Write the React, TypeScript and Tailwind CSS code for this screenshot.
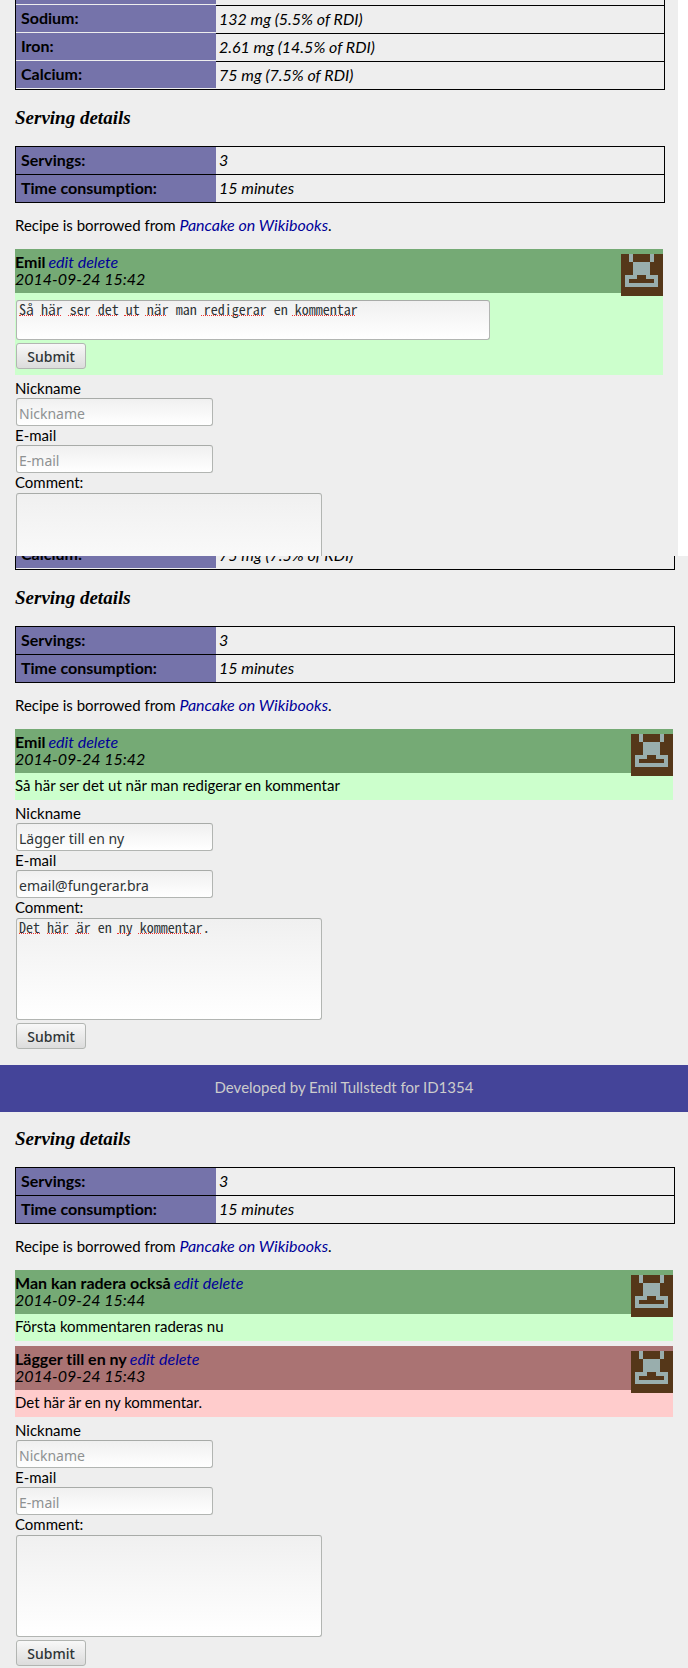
import type { ReactNode } from "react";

const FIELD =
  "block rounded-[3px] border border-[#b2b5b2] border-t-[#a8aba8] bg-linear-to-b from-[#f0f0f0] to-white px-0.5 text-[#2e3436] placeholder:text-[#8e9192] placeholder:opacity-100 outline-none";
const MONO =
  "font-['Noto_Sans_Mono_CJK_SC','Noto_Sans_Mono_CJK_JP','Liberation_Mono',monospace] text-[14px] leading-4";
const SANS = "font-['Noto_Sans',sans-serif] text-[14px]";

function Row({ label, value, light = false }: { label: string; value: string; light?: boolean }) {
  return (
    <tr className="h-7">
      <th
        scope="row"
        className={
          light
            ? "w-[200px] border-b border-b-[#eeeeee] bg-[#7573aa] bg-clip-padding pt-0 pr-0 pb-0.5 pl-[5px] text-left font-bold"
            : "w-[200px] border-b border-b-black bg-[#7573aa] pt-0 pr-0 pb-0.5 pl-[5px] text-left font-bold"
        }
      >
        {label}
      </th>
      <td
        className={
          light
            ? "border-t border-black pt-0 pr-0 pb-0.5 pl-[3px] italic"
            : "border-b border-black pt-0 pr-0 pb-0.5 pl-[3px] italic"
        }
      >
        {value}
      </td>
    </tr>
  );
}

function Table({ children, top = false }: { children: ReactNode; top?: boolean }) {
  return (
    <div className="-mr-0.5">
      <table
        className={
          top
            ? "w-full table-fixed border-separate border-spacing-0 border-x border-t border-black leading-[19px]"
            : "w-full table-fixed border-separate border-spacing-0 border-x border-b border-black leading-[19px]"
        }
      >
        <tbody>{children}</tbody>
      </table>
    </div>
  );
}

function Serving() {
  return (
    <>
      <h2 className="flex h-14 items-center font-['Liberation_Serif',serif] text-[19px] leading-6 font-bold italic">
        Serving details
      </h2>
      <Table top>
        <Row label="Servings:" value="3" />
        <Row label="Time consumption:" value="15 minutes" />
      </Table>
      <p className="pt-[13px] pb-[15px] text-[15px] leading-[18px]">
        Recipe is borrowed from{" "}
        <a href="#wikibooks" className="text-[16px] text-[#000099] italic">
          Pancake on Wikibooks
        </a>
        .
      </p>
    </>
  );
}

function Avatar() {
  return (
    <svg viewBox="0 0 42 42" className="absolute top-[5px] right-0 size-[42px]" shapeRendering="crispEdges" aria-hidden="true">
      <path fill="#553719" d="M0 0h42v42H0z" />
      <path
        fill="#99aead"
        d="M8 0h4v8h17V0h4v8h-4v13h8v12H4V21h8V8H8zM16 21v4H8v4h25v-4h-8v-4z"
        fillRule="evenodd"
      />
    </svg>
  );
}

type CommentProps = { name: string; date: string; tone?: "green" | "red"; children: ReactNode };

function Comment({ name, date, tone = "green", children }: CommentProps) {
  return (
    <article className={tone === "green" ? "relative mb-[5px] bg-[#ccffcc]" : "relative mb-[5px] bg-[#ffcccc]"}>
      <header
        className={
          tone === "green" ? "bg-[#75aa75] pt-1 pb-1.5 leading-[17px]" : "bg-[#aa7373] pt-1 pb-1.5 leading-[17px]"
        }
      >
        <div className="flex gap-[3px]">
          <b>{name}</b>
          <span className="text-[#000099] italic">
            <a href="#edit">edit</a> <a href="#delete">delete</a>
          </span>
        </div>
        <time className="block italic">{date}</time>
      </header>
      {children}
      <Avatar />
    </article>
  );
}

function Text({ children }: { children: ReactNode }) {
  return <p className="pt-1 pb-1.5 text-[15px] leading-[17px]">{children}</p>;
}

function Submit() {
  return (
    <button
      type="submit"
      className={`${SANS} mt-[3px] block h-[26px] w-[70px] rounded-[3px] border border-[#b2b5b2] bg-linear-to-b from-[#f8f8f8] to-[#dcdcdc] pt-0.5 leading-5 font-medium text-[#2e3436]`}
    >
      Submit
    </button>
  );
}

/* Dotted red marks under the words that the spelling check rejects. */
function Spelling({ text, known }: { text: string; known: string[] }) {
  return (
    <div aria-hidden="true" className={`${MONO} pointer-events-none absolute top-0 left-[3px] flex gap-[1ch]`}>
      {text.split(" ").map((word, i) => (
        <span
          key={i}
          className={known.includes(word) ? "h-4" : "h-4 border-b border-dotted border-[#ee3333]"}
          style={{ width: `${word.replace(".", "").length}ch` }}
        />
      ))}
    </div>
  );
}

type FormProps = { id: string; nick?: string; mail?: string; comment?: string; cut?: boolean };

function CommentForm({ id, nick = "", mail = "", comment = "", cut = false }: FormProps) {
  return (
    <form className="text-[15px] leading-4" onSubmit={(e) => e.preventDefault()}>
      <label htmlFor={`${id}-nick`} className="block pb-0.5">
        Nickname
      </label>
      <input
        id={`${id}-nick`}
        type="text"
        placeholder="Nickname"
        defaultValue={nick}
        className={`${FIELD} ${SANS} mb-px ml-px h-7 w-[197px] pt-0.5`}
      />
      <label htmlFor={`${id}-mail`} className="block pb-0.5">
        E-mail
      </label>
      <input
        id={`${id}-mail`}
        type="email"
        placeholder="E-mail"
        defaultValue={mail}
        className={`${FIELD} ${SANS} mb-px ml-px h-7 w-[197px] pt-0.5`}
      />
      <label htmlFor={`${id}-comment`} className="block pb-[3px]">
        Comment:
      </label>
      <div className={cut ? "relative ml-px h-[63px] overflow-hidden" : "relative ml-px"}>
        <textarea
          id={`${id}-comment`}
          defaultValue={comment}
          spellCheck={false}
          className={`${FIELD} ${MONO} h-[102px] w-[306px] resize-none`}
        />
        {comment && <Spelling text={comment} known={["en"]} />}
      </div>
      {!cut && (
        <div className="ml-px">
          <Submit />
        </div>
      )}
    </form>
  );
}

const EDITED = "Så här ser det ut när man redigerar en kommentar";

export default function App() {
  return (
    <div className="min-h-screen bg-[#eeeeee] font-['Lato',sans-serif] text-[16px] text-black [font-variant-ligatures:none]">
      <div className="bg-white">
        <section className="mr-2.5 overflow-hidden bg-[#eeeeee] px-[15px]">
          <Table>
            <tr className="h-[5px]">
              <th className="w-[200px] border-b border-b-[#eeeeee] bg-[#7573aa] bg-clip-padding p-0" />
              <td className="p-0" />
            </tr>
            <Row light label="Sodium:" value="132 mg (5.5% of RDI)" />
            <Row light label="Iron:" value="2.61 mg (14.5% of RDI)" />
            <Row light label="Calcium:" value="75 mg (7.5% of RDI)" />
          </Table>
          <Serving />
          <Comment name="Emil" date="2014-09-24 15:42">
            <form className="pt-[7px] pb-1.5 pl-px" onSubmit={(e) => e.preventDefault()}>
              <div className="relative">
                <textarea
                  aria-label="Comment"
                  defaultValue={EDITED}
                  spellCheck={false}
                  className={`${FIELD} ${MONO} h-10 w-[474px] resize-none`}
                />
                <Spelling text={EDITED} known={["man", "en"]} />
              </div>
              <Submit />
            </form>
          </Comment>
          <CommentForm id="first" cut />
        </section>
      </div>

      <section className="overflow-hidden px-[15px] pb-4">
        <div className="-mt-[15px]">
          <Table>
            <Row light label="Calcium:" value="75 mg (7.5% of RDI)" />
          </Table>
          <Serving />
          <Comment name="Emil" date="2014-09-24 15:42">
            <Text>{EDITED}</Text>
          </Comment>
          <CommentForm id="second" nick="Lägger till en ny" mail="email@fungerar.bra" comment="Det här är en ny kommentar." />
        </div>
      </section>

      <footer className="bg-[#444499] pt-[13px] pb-[15px] text-center text-[15px] leading-[19px] text-[#cccccc]">
        Developed by Emil Tullstedt for ID1354
      </footer>

      <section className="overflow-hidden px-[15px] pb-0.5">
        <div className="-mt-px">
          <Serving />
          <Comment name="Man kan radera också" date="2014-09-24 15:44">
            <Text>Första kommentaren raderas nu</Text>
          </Comment>
          <Comment name="Lägger till en ny" date="2014-09-24 15:43" tone="red">
            <Text>Det här är en ny kommentar.</Text>
          </Comment>
          <CommentForm id="third" />
        </div>
      </section>
    </div>
  );
}
